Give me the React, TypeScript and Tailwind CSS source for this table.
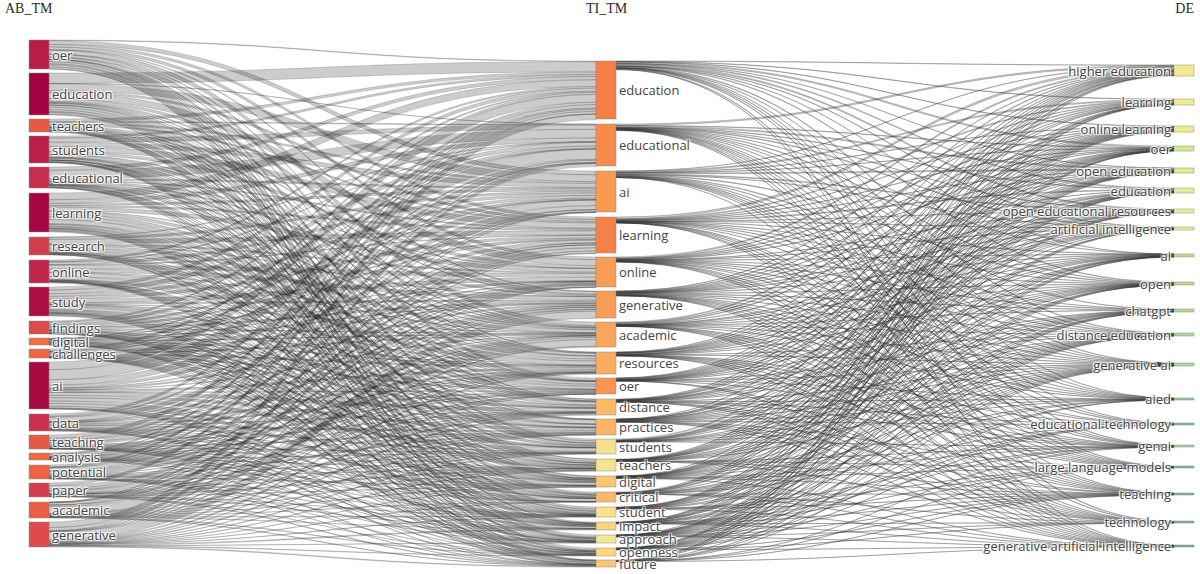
import React, { useMemo } from 'react';

type SankeyNode = { label: string; y0: number; y1: number; color: string };
type Flow = { s: number; t: number; v: number };

// measured node boxes, page coordinates
const leftNodes: SankeyNode[] = [
  { label: 'oer', y0: 40, y1: 69, color: '#b81d47' },
  { label: 'education', y0: 73, y1: 115, color: '#a00340' },
  { label: 'teachers', y0: 119, y1: 132, color: '#e55a45' },
  { label: 'students', y0: 136, y1: 163, color: '#bb1f48' },
  { label: 'educational', y0: 167, y1: 188, color: '#c92d4b' },
  { label: 'learning', y0: 193, y1: 232, color: '#a50641' },
  { label: 'research', y0: 237, y1: 255, color: '#d23e4e' },
  { label: 'online', y0: 260, y1: 283, color: '#c0264a' },
  { label: 'study', y0: 287, y1: 316, color: '#ac0e44' },
  { label: 'findings', y0: 321, y1: 334, color: '#dc4a4c' },
  { label: 'digital', y0: 338, y1: 345, color: '#f46d43' },
  { label: 'challenges', y0: 349, y1: 358, color: '#f06543' },
  { label: 'ai', y0: 362, y1: 409, color: '#a80a42' },
  { label: 'data', y0: 414, y1: 431, color: '#cb2f4b' },
  { label: 'teaching', y0: 435, y1: 449, color: '#e65a45' },
  { label: 'analysis', y0: 453, y1: 460, color: '#f06744' },
  { label: 'potential', y0: 465, y1: 479, color: '#ee6243' },
  { label: 'paper', y0: 483, y1: 497, color: '#d43d4e' },
  { label: 'academic', y0: 502, y1: 518, color: '#ea5e46' },
  { label: 'generative', y0: 522, y1: 547, color: '#dd4b4c' },
];

const midNodes: SankeyNode[] = [
  { label: 'education', y0: 61, y1: 119, color: '#f67f47' },
  { label: 'educational', y0: 124, y1: 166, color: '#f68b4c' },
  { label: 'ai', y0: 171, y1: 212, color: '#f99a53' },
  { label: 'learning', y0: 217, y1: 253, color: '#f58146' },
  { label: 'online', y0: 257, y1: 287, color: '#f99c55' },
  { label: 'generative', y0: 291, y1: 318, color: '#f99c55' },
  { label: 'academic', y0: 322, y1: 347, color: '#fba55c' },
  { label: 'resources', y0: 352, y1: 374, color: '#fcac60' },
  { label: 'oer', y0: 378, y1: 394, color: '#f99451' },
  { label: 'distance', y0: 399, y1: 415, color: '#fdb867' },
  { label: 'practices', y0: 419, y1: 435, color: '#fcb364' },
  { label: 'students', y0: 439, y1: 454, color: '#f6e08a' },
  { label: 'teachers', y0: 459, y1: 471, color: '#f4e68e' },
  { label: 'digital', y0: 476, y1: 487, color: '#fdc472' },
  { label: 'critical', y0: 492, y1: 502, color: '#fcb86a' },
  { label: 'student', y0: 507, y1: 517, color: '#fde08b' },
  { label: 'impact', y0: 522, y1: 530, color: '#fed27c' },
  { label: 'approach', y0: 535, y1: 543, color: '#f0e88d' },
  { label: 'openness', y0: 548, y1: 556, color: '#fed680' },
  { label: 'future', y0: 560, y1: 567, color: '#fdc573' },
];

const rightNodes: SankeyNode[] = [
  { label: 'higher education', y0: 65, y1: 76, color: '#f3e98e' },
  { label: 'learning', y0: 99, y1: 105, color: '#f3e98e' },
  { label: 'online learning', y0: 126, y1: 132, color: '#f0eb8d' },
  { label: 'oer', y0: 146, y1: 151, color: '#d3ec8c' },
  { label: 'open education', y0: 168, y1: 173, color: '#dcee92' },
  { label: 'education', y0: 188, y1: 193, color: '#e3f196' },
  { label: 'open educational resources', y0: 209, y1: 213, color: '#eaf08f' },
  { label: 'artificial intelligence', y0: 227, y1: 230, color: '#e3f196' },
  { label: 'ai', y0: 254, y1: 257, color: '#b8df8c' },
  { label: 'open', y0: 282, y1: 285, color: '#b8df8c' },
  { label: 'chatgpt', y0: 309, y1: 312, color: '#abda8a' },
  { label: 'distance education', y0: 333, y1: 336, color: '#a8d99a' },
  { label: 'generative ai', y0: 363, y1: 366, color: '#a8d99a' },
  { label: 'aied', y0: 398, y1: 400, color: '#8ccb9a' },
  { label: 'educational technology', y0: 423, y1: 425, color: '#7dbf8f' },
  { label: 'genai', y0: 445, y1: 447, color: '#9fd49a' },
  { label: 'large language models', y0: 466, y1: 468, color: '#7fba8c' },
  { label: 'teaching', y0: 493, y1: 495, color: '#78b68a' },
  { label: 'technology', y0: 521, y1: 523, color: '#72b48c' },
  { label: 'generative artificial intelligence', y0: 545, y1: 547, color: '#6cb08c' },
];

const X_LEFT = 29;
const X_MID = 596;
const X_RIGHT = 1174;
const NODE_W = 20;

const mulberry = (seed: number) => () => {
  seed = (seed + 0x6d2b79f5) | 0;
  let t = Math.imul(seed ^ (seed >>> 15), 1 | seed);
  t = (t + Math.imul(t ^ (t >>> 7), 61 | t)) ^ t;
  return ((t ^ (t >>> 14)) >>> 0) / 4294967296;
};

function balance(m: number[][], rows: number[], cols: number[]) {
  const a = m.map(r => r.slice());
  for (let k = 0; k < 80; k++) {
    a.forEach((r, i) => {
      const s = r.reduce((p, c) => p + c, 0);
      if (s > 0) r.forEach((_, j) => (r[j] *= rows[i] / s));
    });
    cols.forEach((c, j) => {
      let s = 0;
      a.forEach(r => (s += r[j]));
      if (s > 0) a.forEach(r => (r[j] *= c / s));
    });
  }
  return a;
}

function makeFlows(
  src: SankeyNode[],
  tgt: SankeyNode[],
  rows: number[],
  cols: number[],
  seed: number,
  density: number,
  skew: number,
  sameBoost: number
) {
  const rand = mulberry(seed);
  const m = src.map(s =>
    tgt.map(t => {
      if (rand() > density) return 0;
      let w = Math.pow(rand(), skew) + 0.04;
      if (s.label === t.label) w *= sameBoost;
      return w;
    })
  );
  const total = rows.reduce((p, c) => p + c, 0);
  const colTotal = cols.reduce((p, c) => p + c, 0);
  const scaled = cols.map(c => (c * total) / colTotal);
  const a = balance(m, rows, scaled);
  const flows: Flow[] = [];
  a.forEach((r, i) => r.forEach((v, j) => v > 0.01 && flows.push({ s: i, t: j, v })));
  return flows;
}

function bandPaths(src: SankeyNode[], tgt: SankeyNode[], flows: Flow[], x0: number, x1: number) {
  const out = src.map(() => [] as Flow[]);
  const inn = tgt.map(() => [] as Flow[]);
  flows.forEach(f => {
    out[f.s].push(f);
    inn[f.t].push(f);
  });
  const sy = new Map<Flow, number>();
  const ty = new Map<Flow, number>();
  out.forEach((arr, i) => {
    arr.sort((a, b) => tgt[a.t].y0 - tgt[b.t].y0);
    let y = src[i].y0;
    arr.forEach(f => {
      sy.set(f, y);
      y += f.v;
    });
  });
  inn.forEach((arr, j) => {
    arr.sort((a, b) => src[a.s].y0 - src[b.s].y0);
    let y = tgt[j].y0;
    arr.forEach(f => {
      ty.set(f, y);
      y += f.v;
    });
  });
  const xm = (x0 + x1) / 2;
  return flows.map(f => {
    const a = sy.get(f)!;
    const b = ty.get(f)!;
    const w = f.v;
    return `M${x0},${a}C${xm},${a} ${xm},${b} ${x1},${b}L${x1},${b + w}C${xm},${b + w} ${xm},${a + w} ${x0},${a + w}Z`;
  });
}

const labelCls =
  "fill-[#444] text-[13px] font-['Open_Sans',sans-serif] [text-shadow:1px_1px_1px_#fff,-1px_-1px_1px_#fff,1px_-1px_1px_#fff,-1px_1px_1px_#fff]";

const NodeColumn: React.FC<{ nodes: SankeyNode[]; x: number; side: 'left' | 'right' }> = ({ nodes, x, side }) => (
  <g>
    {nodes.map(n => (
      <rect
        key={'r' + n.label}
        x={x}
        y={n.y0}
        width={NODE_W}
        height={Math.max(n.y1 - n.y0, 2)}
        fill={n.color}
        stroke="#8a8a8a"
        strokeWidth={0.5}
      />
    ))}
    {nodes.map(n => (
      <text
        key={'t' + n.label}
        x={side === 'right' ? x + NODE_W + 3 : x - 3}
        y={(n.y0 + Math.max(n.y1, n.y0 + 2)) / 2}
        dominantBaseline="central"
        textAnchor={side === 'right' ? 'start' : 'end'}
        className={labelCls}
      >
        {n.label}
      </text>
    ))}
  </g>
);

export default function App() {
  const paths = useMemo(() => {
    const leftH = leftNodes.map(n => n.y1 - n.y0);
    const midH = midNodes.map(n => n.y1 - n.y0);
    const rightH = rightNodes.map(n => n.y1 - n.y0);
    const f1 = makeFlows(leftNodes, midNodes, leftH, midH, 7, 0.93, 1.8, 4);
    const rightTotal = rightH.reduce((p, c) => p + c, 0);
    const raw = midH.map(h => Math.pow(h, 0.8));
    const rawTotal = raw.reduce((p, c) => p + c, 0);
    const midOut = raw.map(r => (r * rightTotal) / rawTotal);
    const f2 = makeFlows(midNodes, rightNodes, midOut, rightH, 23, 0.85, 1.4, 3);
    return {
      first: bandPaths(leftNodes, midNodes, f1, X_LEFT + NODE_W, X_MID),
      second: bandPaths(midNodes, rightNodes, f2, X_MID + NODE_W, X_RIGHT),
    };
  }, []);

  return (
    <div className="w-[1200px] h-[574px] bg-white overflow-hidden flex flex-col">
      <div className="h-[20px] grid grid-cols-[586px_1fr_auto] font-['Liberation_Serif',serif] text-[14px] leading-[18px] text-[#2a2a2a]">
        <span className="pl-[5px]">AB_TM</span>
        <span>TI_TM</span>
        <span className="pr-[6px]">DE</span>
      </div>
      <svg width={1200} height={554} viewBox="0 20 1200 554" className="block">
        <g fill="rgba(0,0,0,0.2)" stroke="rgba(68,68,68,0.42)" strokeWidth={0.5}>
          {paths.first.map((d, i) => (
            <path key={'a' + i} d={d} />
          ))}
        </g>
        <g fill="rgba(0,0,0,0.2)" stroke="rgba(60,60,60,0.55)" strokeWidth={0.5}>
          {paths.second.map((d, i) => (
            <path key={'b' + i} d={d} />
          ))}
        </g>
        <NodeColumn nodes={leftNodes} x={X_LEFT} side="right" />
        <NodeColumn nodes={midNodes} x={X_MID} side="right" />
        <NodeColumn nodes={rightNodes} x={X_RIGHT} side="left" />
      </svg>
    </div>
  );
}
